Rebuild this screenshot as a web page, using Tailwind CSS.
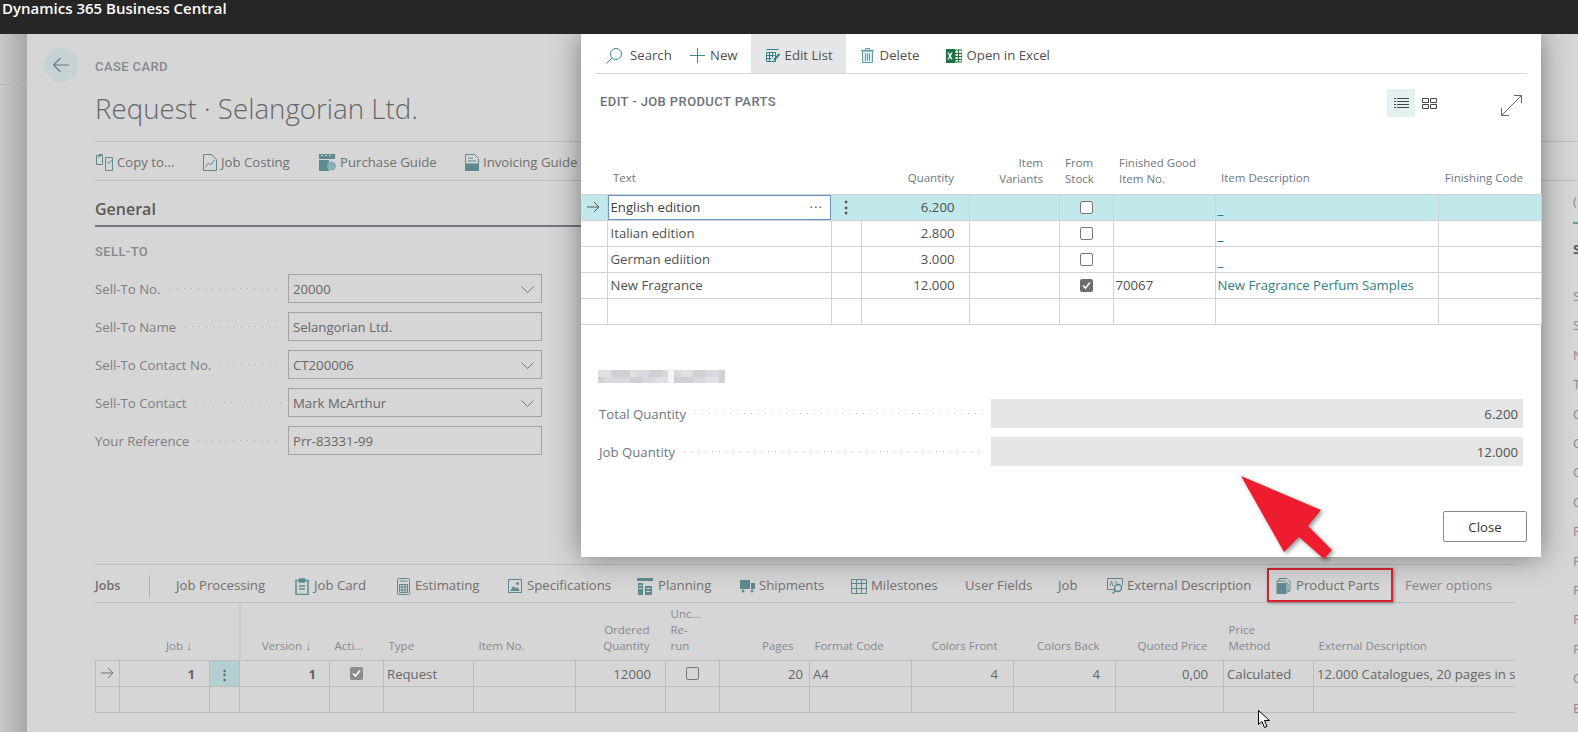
<!DOCTYPE html>
<html lang="en">
<head>
    <meta charset="UTF-8">
    <title>Dynamics 365 Business Central</title>
    <script src="https://cdn.jsdelivr.net/npm/@tailwindcss/browser@4"></script>
</head>
<body class="relative w-[1578px] h-[732px] overflow-hidden bg-[#d6d6d6] font-['Open_Sans',sans-serif] text-[13.2px] text-[#666]">

<!-- Header -->
<header class="relative z-30 h-[34px] bg-[#262626] pl-[2px] text-[15px] leading-[17px] font-semibold text-white">Dynamics 365 Business Central</header>

<div class="flex h-[698px]">
    <!-- strip left of the card -->
    <div class="w-[27px] bg-gradient-to-r from-[#c9c9c9] to-[#a9a9a9]">
        <div class="h-[51px] border-b border-[#b5b5b5]"></div>
    </div>

    <!-- Back button -->
    <div class="w-[68px] pt-[14px] pl-[17px]">
        <div class="flex h-[34px] w-[34px] items-center justify-center rounded-full bg-[#c5d3d5]">
            <svg class="h-[18px] w-[18px]" viewBox="0 0 18 18" fill="none" stroke="#6a7a7c" stroke-width="1.1"><path d="M1.500 9H17M8.500 2 1.500 9l7 7"/></svg>
        </div>
    </div>

    <!-- Card -->
    <main class="flex-1">
        <div class="mt-[25px] h-[16px] font-['Roboto',sans-serif] text-[13px] leading-[16px] font-medium tracking-[0.4px] text-[#85888f]">CASE CARD</div>
        <h1 class="mt-[13px] h-[40px] text-[27.700px] leading-[40px] font-light text-[#666]">Request · Selangorian Ltd.</h1>

        <!-- Card actions -->
        <div class="mt-[13px] flex h-[40px] items-center border-y border-[#bdbdbd] pt-[3px] text-[#707070]">
            <svg class="ml-px h-[17px] w-[18px]" viewBox="0 0 18 17" fill="none" stroke="#5f8a8f"><path d="M.5 1.500h6v9h-6zM3 4V.5h4M9.500 3.500h7v13h-7zM11 7.500l2 2 3-4"/></svg>
            <span class="ml-[3px] w-[86px]">Copy to...</span>
            <svg class="h-[17px] w-[14px]" viewBox="0 0 14 17" fill="none" stroke="#5f8a8f"><path d="M.5.5h8l5 5v11H.5zM2.500 13l3-4 2 2 4-5"/></svg>
            <span class="ml-[4px] w-[98px]">Job Costing</span>
            <svg class="h-[17px] w-[17px]" viewBox="0 0 17 17" fill="#5f8a8f"><path d="M0 0h16v5H0zM0 6h10v11H0z"/><path d="M2 1h2v1H2zM6 1h2v1H6zM10 1h2v1h-2z" fill="#d6d6d6"/><circle cx="12.500" cy="12" r="4.500" fill="#8bb0b4"/></svg>
            <span class="ml-[4px] w-[125px]">Purchase Guide</span>
            <svg class="h-[17px] w-[14px]" viewBox="0 0 14 17" fill="none" stroke="#5f8a8f"><path d="M.5.5h9l4 4v12H.5zM3 4h5M3 7h8"/><path d="M0 10h14v7H0z" fill="#5f8a8f"/></svg>
            <span class="ml-[4px]">Invoicing Guide</span>
        </div>

        <div class="flex">
            <div class="w-[1420px]">
                <!-- General -->
                <div class="h-[46px] border-b-2 border-[#70757f] pt-[17px] text-[16px] leading-[22px] font-semibold text-[#595959]">General</div>
                <div class="mt-[17px] h-[16px] font-['Roboto',sans-serif] text-[13px] leading-[16px] font-medium tracking-[0.4px] text-[#85888f]">SELL-TO</div>

                <div class="mt-[14px] flex w-[447px] flex-col gap-[9px]">
                    <div class="flex h-[29px] items-center">
                        <span class="pt-[2px] text-[#7c7f85]">Sell-To No.</span>
                        <div class="mx-[6px] h-[3px] flex-1 bg-[radial-gradient(circle,#a8a8a8_0.7px,transparent_1px)] bg-[length:7px_3px] bg-repeat-x"></div>
                        <div class="flex h-[29px] w-[254px] items-center justify-between border border-[#a3a3a3] px-[4px] pt-[2px] text-[#666]">20000
                            <svg class="mr-[3px] h-[8px] w-[13px]" viewBox="0 0 13 8" fill="none" stroke="#777"><path d="m.5.5 6 6 6-6"/></svg>
                        </div>
                    </div>
                    <div class="flex h-[29px] items-center">
                        <span class="pt-[2px] text-[#7c7f85]">Sell-To Name</span>
                        <div class="mx-[6px] h-[3px] flex-1 bg-[radial-gradient(circle,#a8a8a8_0.7px,transparent_1px)] bg-[length:7px_3px] bg-repeat-x"></div>
                        <div class="flex h-[29px] w-[254px] items-center border border-[#a3a3a3] px-[4px] pt-[2px] text-[#666]">Selangorian Ltd.</div>
                    </div>
                    <div class="flex h-[29px] items-center">
                        <span class="pt-[2px] text-[#7c7f85]">Sell-To Contact No.</span>
                        <div class="mx-[6px] h-[3px] flex-1 bg-[radial-gradient(circle,#a8a8a8_0.7px,transparent_1px)] bg-[length:7px_3px] bg-repeat-x"></div>
                        <div class="flex h-[29px] w-[254px] items-center justify-between border border-[#a3a3a3] px-[4px] pt-[2px] text-[#666]">CT200006
                            <svg class="mr-[3px] h-[8px] w-[13px]" viewBox="0 0 13 8" fill="none" stroke="#777"><path d="m.5.5 6 6 6-6"/></svg>
                        </div>
                    </div>
                    <div class="flex h-[29px] items-center">
                        <span class="pt-[2px] text-[#7c7f85]">Sell-To Contact</span>
                        <div class="mx-[6px] h-[3px] flex-1 bg-[radial-gradient(circle,#a8a8a8_0.7px,transparent_1px)] bg-[length:7px_3px] bg-repeat-x"></div>
                        <div class="flex h-[29px] w-[254px] items-center justify-between border border-[#a3a3a3] px-[4px] pt-[2px] text-[#666]">Mark McArthur
                            <svg class="mr-[3px] h-[8px] w-[13px]" viewBox="0 0 13 8" fill="none" stroke="#777"><path d="m.5.5 6 6 6-6"/></svg>
                        </div>
                    </div>
                    <div class="flex h-[29px] items-center">
                        <span class="pt-[2px] text-[#7c7f85]">Your Reference</span>
                        <div class="mx-[6px] h-[3px] flex-1 bg-[radial-gradient(circle,#a8a8a8_0.7px,transparent_1px)] bg-[length:7px_3px] bg-repeat-x"></div>
                        <div class="flex h-[29px] w-[254px] items-center border border-[#a3a3a3] px-[4px] pt-[2px] text-[#666]">Prr-83331-99</div>
                    </div>
                </div>

                <!-- Jobs part -->
                <div class="mt-[109px] flex h-[39px] items-center border-y border-[#bdbdbd] pt-[5px] text-[#707070]">
                    <span class="w-[54px] text-[12.500px] font-semibold">Jobs</span>
                    <div class="h-[23px] w-px bg-[#b0b0b0]"></div>
                    <span class="ml-[26px] w-[119px]">Job Processing</span>
                    <svg class="h-[17px] w-[14px]" viewBox="0 0 14 17" fill="none" stroke="#5f8a8f" stroke-width="1.500"><path d="M1 2.500h12v14H1zM4.500 1h5v3h-5zM4 8h6M4 11h6"/></svg>
                    <span class="ml-[5px] w-[83px]">Job Card</span>
                    <svg class="h-[17px] w-[13px]" viewBox="0 0 13 17" fill="none" stroke="#5f8a8f"><rect x=".5" y=".5" width="12" height="16" rx="1"/><path d="M2.500 3h8M2.500 6.500h8v8h-8zM5 6.500v8M8 6.500v8M2.500 9h8M2.500 12h8"/></svg>
                    <span class="ml-[5px] w-[93px]">Estimating</span>
                    <svg class="h-[14px] w-[14px]" viewBox="0 0 14 14" fill="#5f8a8f"><path d="M0 0h14v14H0zm1 1v12h12V1z"/><path d="m2 12 3.500-5 2 2.500 1.500-1.500 3 4z"/><circle cx="9.500" cy="4.500" r="1.500"/></svg>
                    <span class="ml-[5px] w-[110px]">Specifications</span>
                    <svg class="h-[17px] w-[16px]" viewBox="0 0 16 17" fill="#5f8a8f"><path d="M0 0h16v3H0zM1 5h5v12H1zM8 8h7v9H8z"/><path d="M2 7h3v1H2zM2 10h3v1H2zM9.500 10h4v1h-4zM9.500 13h4v1h-4z" fill="#d6d6d6"/></svg>
                    <span class="ml-[5px] w-[82px]">Planning</span>
                    <svg class="h-[14px] w-[15px]" viewBox="0 0 15 14" fill="#5f8a8f"><path d="M0 1h10v9H0zM11 4h4v6h-4z"/><circle cx="3" cy="12" r="1.500"/><circle cx="12" cy="12" r="1.500"/></svg>
                    <span class="ml-[4px] w-[92px]">Shipments</span>
                    <svg class="h-[15px] w-[16px]" viewBox="0 0 16 15" fill="none" stroke="#5f8a8f"><path d="M.5.5h15v14H.5zM.5 4.500h15M.5 9.500h15M5.500.5v14M10.500.5v14"/></svg>
                    <span class="ml-[4px] w-[94px]">Milestones</span>
                    <span class="w-[93px]">User Fields</span>
                    <span class="w-[49px]">Job</span>
                    <svg class="h-[16px] w-[16px]" viewBox="0 0 16 16" fill="none" stroke="#5f8a8f"><path d="M7 11.500H.5V.5h15v7"/><circle cx="11" cy="10" r="3.500" stroke-width="1.500"/><path d="m8.500 12.500-3 3" stroke-width="1.500"/><path d="m3 8 1.500-5L6 8M9 3v3"/></svg>
                    <span class="ml-[4px] w-[149px]">External Description</span>
                    <svg class="h-[16px] w-[15px]" viewBox="0 0 15 16" fill="none" stroke="#5f8a8f"><path d="M3 3V.5h8l3 3V13h-2M1 5V3h8l3 3v8h-2"/><path d="M1 5.500h9V16H1z" fill="#5f8a8f"/></svg>
                    <span class="ml-[5px] w-[109px]">Product Parts</span>
                    <span class="text-[#8a8a8a]">Fewer options</span>
                </div>

                <!-- Jobs lines -->
                <div class="overflow-hidden">
                    <table class="w-[1430px] table-fixed border-collapse text-[#666]">
                        <colgroup>
                            <col class="w-[24px]"><col class="w-[90px]"><col class="w-[30px]"><col class="w-[90px]"><col class="w-[54px]"><col class="w-[90px]"><col class="w-[102px]"><col class="w-[90px]"><col class="w-[54px]"><col class="w-[90px]"><col class="w-[102px]"><col class="w-[102px]"><col class="w-[102px]"><col class="w-[108px]"><col class="w-[90px]"><col class="w-[212px]">
                        </colgroup>
                        <thead class="text-[11.500px] leading-[16px] font-normal text-[#85888f]">
                            <tr class="h-[57px] align-bottom">
                                <th class="font-normal"></th>
                                <th class="pr-[17px] pb-[6px] text-right font-normal">Job <span class="text-[13px]">↓</span></th>
                                <th class="border-r-2 border-[#c9c9c9] font-normal"></th>
                                <th class="pr-[18px] pb-[6px] text-right font-normal">Version <span class="text-[13px]">↓</span></th>
                                <th class="pb-[6px] pl-[5px] text-left font-normal">Acti...</th>
                                <th class="pb-[6px] pl-[5px] text-left font-normal">Type</th>
                                <th class="pb-[6px] pl-[5px] text-left font-normal">Item No.</th>
                                <th class="pr-[16px] pb-[6px] text-right font-normal">Ordered<br>Quantity</th>
                                <th class="pb-[6px] pl-[5px] text-left font-normal">Unc...<br>Re-<br>run</th>
                                <th class="pr-[16px] pb-[6px] text-right font-normal">Pages</th>
                                <th class="pb-[6px] pl-[5px] text-left font-normal">Format Code</th>
                                <th class="pr-[16px] pb-[6px] text-right font-normal">Colors Front</th>
                                <th class="pr-[16px] pb-[6px] text-right font-normal">Colors Back</th>
                                <th class="pr-[16px] pb-[6px] text-right font-normal">Quoted Price</th>
                                <th class="pb-[6px] pl-[5px] text-left font-normal">Price<br>Method</th>
                                <th class="pb-[6px] pl-[5px] text-left font-normal">External Description</th>
                            </tr>
                        </thead>
                        <tbody>
                            <tr class="h-[26px] [&>td]:pt-[3px]">
                                <td class="border border-[#bcbcbc] pt-0! pl-[5px]"><svg class="h-[12px] w-[13px]" viewBox="0 0 13 12" fill="none" stroke="#777"><path d="M0 6h12M7 1l5 5-5 5"/></svg></td>
                                <td class="border border-[#bcbcbc] pr-[14px] text-right font-bold">1</td>
                                <td class="border border-[#bcbcbc] bg-[#b3cfd1] text-center leading-none font-bold">⋮</td>
                                <td class="border border-[#bcbcbc] pr-[13px] text-right font-bold">1</td>
                                <td class="border border-[#bcbcbc] pt-0! text-center"><span class="inline-flex h-[13px] w-[13px] items-center justify-center rounded-[2px] bg-[#8c8c8c] align-middle"><svg class="h-[9px] w-[9px]" viewBox="0 0 9 9" fill="none" stroke="#fff" stroke-width="1.600"><path d="m1 4.500 2.500 2.500L8 1.500"/></svg></span></td>
                                <td class="border border-[#bcbcbc] pl-[3px]">Request</td>
                                <td class="border border-[#bcbcbc]"></td>
                                <td class="border border-[#bcbcbc] pr-[14px] text-right">12000</td>
                                <td class="border border-[#bcbcbc] pt-0! text-center"><span class="inline-block h-[13px] w-[13px] rounded-[2px] border border-[#777] align-middle"></span></td>
                                <td class="border border-[#bcbcbc] pr-[6px] text-right">20</td>
                                <td class="border border-[#bcbcbc] pl-[3px]">A4</td>
                                <td class="border border-[#bcbcbc] pr-[15px] text-right">4</td>
                                <td class="border border-[#bcbcbc] pr-[15px] text-right">4</td>
                                <td class="border border-[#bcbcbc] pr-[15px] text-right">0,00</td>
                                <td class="border border-[#bcbcbc] pl-[3px]">Calculated</td>
                                <td class="overflow-hidden border-y border-[#bcbcbc] pl-[3px] whitespace-nowrap">12.000 Catalogues, 20 pages in s</td>
                            </tr>
                            <tr class="h-[26px]">
                                <td class="border border-[#bcbcbc]"></td><td class="border border-[#bcbcbc]"></td><td class="border border-[#bcbcbc]"></td><td class="border border-[#bcbcbc]"></td><td class="border border-[#bcbcbc]"></td><td class="border border-[#bcbcbc]"></td><td class="border border-[#bcbcbc]"></td><td class="border border-[#bcbcbc]"></td><td class="border border-[#bcbcbc]"></td><td class="border border-[#bcbcbc]"></td><td class="border border-[#bcbcbc]"></td><td class="border border-[#bcbcbc]"></td><td class="border border-[#bcbcbc]"></td><td class="border border-[#bcbcbc]"></td><td class="border border-[#bcbcbc]"></td><td class="border-y border-[#bcbcbc]"></td>
                            </tr>
                        </tbody>
                    </table>
                </div>
            </div>

            <!-- FactBox, cut off by the window -->
            <aside class="ml-[58px] w-[5px] overflow-hidden text-[#8a8a8a]">
                <div class="h-[43px] border-b-2 border-[#6f9a9e] pt-[11px] leading-[18px]">(</div>
                <div class="mt-[16px] h-[18px] leading-[18px] font-bold text-[#595959]">S</div>
                <div class="mt-[24px] flex flex-col text-[13px] leading-[29.400px]">
                    <span>S</span><span>S</span><span>N</span><span>T</span><span>C</span><span>C</span><span>C</span><span>C</span><span>F</span><span>F</span><span>F</span><span>F</span><span>F</span><span>C</span><span>E</span>
                </div>
            </aside>
        </div>
    </main>
</div>

<!-- Dialog -->
<section class="absolute top-[34px] left-[581px] z-20 h-[523px] w-[960px] bg-white text-[#505050] shadow-[0_0_28px_rgba(0,0,0,0.45)]">
    <div class="mx-[14px] flex h-[40px] items-center border-b border-[#d6d6d6] pt-[4px]">
        <svg class="ml-[11px] h-[16px] w-[16px]" viewBox="0 0 16 16" fill="none" stroke="#3f8a8f"><circle cx="10" cy="6" r="5.500"/><path d="M6 10 .5 15.500"/></svg>
        <span class="ml-[8px] w-[60px]">Search</span>
        <svg class="h-[15px] w-[15px]" viewBox="0 0 15 15" fill="none" stroke="#3f8a8f"><path d="M7.500 0v15M0 7.500h15"/></svg>
        <span class="ml-[5px]">New</span>
        <div class="ml-[13px] -mt-[4px] flex h-[39px] w-[95px] items-center bg-[#e5e6e8] pt-[4px] pl-[15px]">
            <svg class="h-[13px] w-[15px]" viewBox="0 0 15 13" fill="none" stroke="#2f7f84"><path d="M.5.5h12M.5 3.500h9v9H.5zM.5 6.500h8M.5 9.500h5M3.500 3.500v9M6.500 3.500v5"/><path d="m8 11 5.500-6" stroke-width="2"/></svg>
            <span class="ml-[4px]">Edit List</span>
        </div>
        <svg class="ml-[15px] h-[15px] w-[13px]" viewBox="0 0 13 15" fill="#dcecee" stroke="#5f9ea3"><path d="M1.500 3h10v11.500h-10zM0 2.500h13M4.500 2.500V.5h4v2M4.500 5.500v7M6.500 5.500v7M8.500 5.500v7"/></svg>
        <span class="ml-[6px] w-[66px]">Delete</span>
        <svg class="h-[16px] w-[16px]" viewBox="0 0 16 16"><path d="M0 1h9v14H0z" fill="#1f7244"/><path d="M9 2h7v12H9z" fill="#fff" stroke="#1f7244"/><path d="M9 5.500h7M9 8.500h7M9 11.500h7M12.500 2v12" stroke="#1f7244"/><path d="m2 4.500 4 7M6 4.500l-4 7" stroke="#fff" stroke-width="1.400"/></svg>
        <span class="ml-[5px]">Open in Excel</span>
    </div>

    <div class="mt-[15px] flex h-[29px] items-start">
        <div class="mt-[1px] ml-[19px] w-[787px] font-['Roboto',sans-serif] text-[13px] leading-[24px] font-medium tracking-[0.4px] text-[#6c727c]">EDIT - JOB PRODUCT PARTS</div>
        <div class="flex h-[28px] w-[28px] items-center justify-center bg-[#e3f1f3]">
            <svg class="h-[12px] w-[15px]" viewBox="0 0 15 12" fill="none" stroke="#444"><path d="M3 1.500h12M3 4.500h12M3 7.500h12M3 10.500h12M0 1.500h2M0 4.500h2M0 7.500h2M0 10.500h2"/></svg>
        </div>
        <div class="flex h-[28px] w-[28px] items-center justify-center">
            <svg class="h-[11px] w-[15px]" viewBox="0 0 15 11" fill="none" stroke="#444"><path d="M.5.5h6v4h-6zM8.500.5h6v4h-6zM.5 6.500h6v4h-6zM8.500 6.500h6v4h-6z"/></svg>
        </div>
        <svg class="mt-[6px] ml-[58px] h-[21px] w-[21px]" viewBox="0 0 21 21" fill="none" stroke="#666"><path d="M1 20 20 1M13 .5h7.500V8M.5 13v7.500H8"/></svg>
    </div>

    <!-- Lines -->
    <table class="mt-[28px] w-[960px] table-fixed border-collapse">
        <colgroup>
            <col class="w-[26px]"><col class="w-[224px]"><col class="w-[30px]"><col class="w-[108px]"><col class="w-[90px]"><col class="w-[54px]"><col class="w-[102px]"><col class="w-[223px]"><col class="w-[103px]">
        </colgroup>
        <thead class="text-[11.500px] leading-[16px] text-[#6e7580]">
            <tr class="h-[48px] align-bottom">
                <th class="font-normal"></th>
                <th class="pb-[8px] pl-[6px] text-left font-normal">Text</th>
                <th class="font-normal"></th>
                <th class="pr-[15px] pb-[8px] text-right font-normal">Quantity</th>
                <th class="pr-[16px] pb-[7px] text-right font-normal">Item<br>Variants</th>
                <th class="pb-[7px] pl-[6px] text-left font-normal">From<br>Stock</th>
                <th class="pb-[7px] pl-[6px] text-left font-normal">Finished Good<br>Item No.</th>
                <th class="pb-[8px] pl-[6px] text-left font-normal">Item Description</th>
                <th class="pr-[18px] pb-[8px] text-right font-normal whitespace-nowrap">Finishing Code</th>
            </tr>
        </thead>
        <tbody>
            <tr class="h-[26px] bg-[#c1e8ea] [&>td]:pt-[2px]">
                <td class="border-y border-r border-[#d2d2d2] pt-0! pl-[6px]"><svg class="h-[12px] w-[13px]" viewBox="0 0 13 12" fill="none" stroke="#555"><path d="M0 6h12M7 1l5 5-5 5"/></svg></td>
                <td class="border-y border-[#d2d2d2] p-0 pt-0!">
                    <div class="flex h-[25px] items-center justify-between border border-[#6a90d0] bg-white pt-[1px] pr-[7px] pl-[2px] text-[#3f3f3f]">English edition<span class="tracking-[1px] text-[#555]">···</span></div>
                </td>
                <td class="border-y border-[#d2d2d2] pt-0! text-center text-[16px] leading-none font-bold">⋮</td>
                <td class="border-y border-r border-[#d2d2d2] pr-[14px] text-right">6.200</td>
                <td class="border-y border-r border-[#d2d2d2]"></td>
                <td class="border-y border-r border-[#d2d2d2] pt-0! text-center"><span class="inline-block h-[13px] w-[13px] rounded-[2px] border border-[#777] bg-white align-middle"></span></td>
                <td class="border-y border-r border-[#d2d2d2]"></td>
                <td class="border-y border-r border-[#d2d2d2] pl-[2px] text-[14px] font-semibold text-[#2f7f84]">_</td>
                <td class="border-y border-r border-[#d2d2d2]"></td>
            </tr>
            <tr class="h-[26px] [&>td]:pt-[2px]">
                <td class="border border-l-0 border-[#d2d2d2]"></td>
                <td class="border border-[#d2d2d2] pl-[3px]">Italian edition</td>
                <td class="border border-[#d2d2d2]"></td>
                <td class="border border-[#d2d2d2] pr-[14px] text-right">2.800</td>
                <td class="border border-[#d2d2d2]"></td>
                <td class="border border-[#d2d2d2] pt-0! text-center"><span class="inline-block h-[13px] w-[13px] rounded-[2px] border border-[#777] align-middle"></span></td>
                <td class="border border-[#d2d2d2]"></td>
                <td class="border border-[#d2d2d2] pl-[2px] text-[14px] font-semibold text-[#2f7f84]">_</td>
                <td class="border border-[#d2d2d2]"></td>
            </tr>
            <tr class="h-[26px] [&>td]:pt-[2px]">
                <td class="border border-l-0 border-[#d2d2d2]"></td>
                <td class="border border-[#d2d2d2] pl-[3px]">German ediition</td>
                <td class="border border-[#d2d2d2]"></td>
                <td class="border border-[#d2d2d2] pr-[14px] text-right">3.000</td>
                <td class="border border-[#d2d2d2]"></td>
                <td class="border border-[#d2d2d2] pt-0! text-center"><span class="inline-block h-[13px] w-[13px] rounded-[2px] border border-[#777] align-middle"></span></td>
                <td class="border border-[#d2d2d2]"></td>
                <td class="border border-[#d2d2d2] pl-[2px] text-[14px] font-semibold text-[#2f7f84]">_</td>
                <td class="border border-[#d2d2d2]"></td>
            </tr>
            <tr class="h-[26px] [&>td]:pt-[2px]">
                <td class="border border-l-0 border-[#d2d2d2]"></td>
                <td class="border border-[#d2d2d2] pl-[3px]">New Fragrance</td>
                <td class="border border-[#d2d2d2]"></td>
                <td class="border border-[#d2d2d2] pr-[14px] text-right">12.000</td>
                <td class="border border-[#d2d2d2]"></td>
                <td class="border border-[#d2d2d2] pt-0! text-center"><span class="inline-flex h-[13px] w-[13px] items-center justify-center rounded-[2px] bg-[#6e6e6e] align-middle"><svg class="h-[9px] w-[9px]" viewBox="0 0 9 9" fill="none" stroke="#fff" stroke-width="1.600"><path d="m1 4.500 2.500 2.500L8 1.500"/></svg></span></td>
                <td class="border border-[#d2d2d2] pl-[2px]">70067</td>
                <td class="border border-[#d2d2d2] pl-[2px] text-[#2f7f84]">New Fragrance Perfum Samples</td>
                <td class="border border-[#d2d2d2]"></td>
            </tr>
            <tr class="h-[26px]">
                <td class="border border-l-0 border-[#d2d2d2]"></td><td class="border border-[#d2d2d2]"></td><td class="border border-[#d2d2d2]"></td><td class="border border-[#d2d2d2]"></td><td class="border border-[#d2d2d2]"></td><td class="border border-[#d2d2d2]"></td><td class="border border-[#d2d2d2]"></td><td class="border border-[#d2d2d2]"></td><td class="border border-[#d2d2d2]"></td>
            </tr>
        </tbody>
    </table>

    <!-- pixelated caption in the source -->
    <svg class="mt-[45px] ml-[17px] h-[13px] w-[127px]" viewBox="0 0 20 2" preserveAspectRatio="none" shape-rendering="crispEdges">
        <path d="M0 0h2v1H0zM5 0h1v1H5zM9 1h2v1H9zM13 0h2v1h-2zM17 1h2v1h-2z" fill="#e0e1e4"/>
        <path d="M2 0h3v1H2zM8 0h2v1H8zM15 0h2v1h-2zM0 1h1v1H0zM5 1h2v1H5zM12 1h3v1h-3zM19 0h1v2h-1z" fill="#cfd0d4"/>
        <path d="M6 0h2v1H6zM10 0h1v1h-1zM12 0h1v1h-1zM17 0h2v1h-2zM1 1h4v1H1zM7 1h2v1H7zM15 1h2v1h-2z" fill="#d8d9dc"/>
        <path d="M11 0h1v2h-1z" fill="#f6f6f7"/>
    </svg>

    <div class="mt-[16px] flex h-[29px] items-center">
        <span class="ml-[18px] pt-[4px] text-[#6e7580]">Total Quantity</span>
        <div class="mx-[6px] h-[3px] flex-1 bg-[radial-gradient(circle,#bbb_0.7px,transparent_1px)] bg-[length:7px_3px] bg-repeat-x"></div>
        <div class="mr-[18px] flex h-[29px] w-[532px] items-center justify-end bg-[#e5e6e8] pt-[4px] pr-[5px]">6.200</div>
    </div>
    <div class="mt-[9px] flex h-[29px] items-center">
        <span class="ml-[18px] pt-[4px] text-[#6e7580]">Job Quantity</span>
        <div class="mx-[6px] h-[3px] flex-1 bg-[radial-gradient(circle,#bbb_0.7px,transparent_1px)] bg-[length:7px_3px] bg-repeat-x"></div>
        <div class="mr-[18px] flex h-[29px] w-[532px] items-center justify-end bg-[#e5e6e8] pt-[4px] pr-[5px]">12.000</div>
    </div>

    <div class="mt-[45px] mr-[14px] flex justify-end">
        <button class="h-[31px] w-[84px] rounded-[2px] border border-[#8a8a8a] bg-white pt-[3px] text-[#333]">Close</button>
    </div>
</section>

<!-- Annotations drawn on the screenshot -->
<svg class="absolute top-[470px] left-[1235px] z-40 h-[95px] w-[105px] drop-shadow-[2px_2px_2px_rgba(0,0,0,0.4)]" viewBox="0 0 105 95">
    <path d="M6 6 86 40 73 56 97 80 89 89 64 67 49 82z" fill="#ed1c2e"/>
</svg>
<div class="absolute top-[568px] left-[1267px] z-10 h-[34px] w-[126px] border-2 border-[#d9232e] shadow-[1px_1px_3px_rgba(0,0,0,0.4)]"></div>
<svg class="absolute top-[710px] left-[1258px] z-40 h-[18px] w-[12px]" viewBox="0 0 12 18"><path d="M.5.5v14l3.500-3 2.500 6 2.500-1-2.500-6h5z" fill="#fff" stroke="#000"/></svg>

</body>
</html>
